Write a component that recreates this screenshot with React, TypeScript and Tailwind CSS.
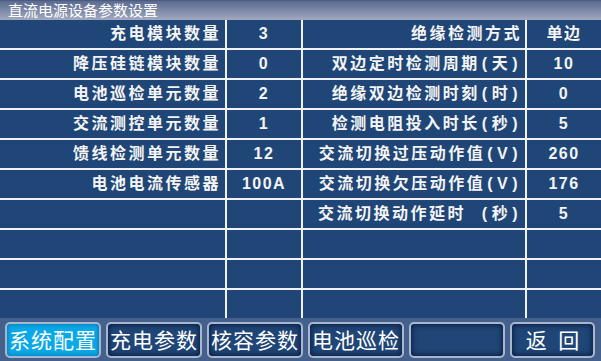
import React from "react";

const left: [string, string][] = [
  ["充电模块数量", "3"],
  ["降压硅链模块数量", "0"],
  ["电池巡检单元数量", "2"],
  ["交流测控单元数量", "1"],
  ["馈线检测单元数量", "12"],
  ["电池电流传感器", "100A"],
  ["", ""],
  ["", ""],
  ["", ""],
  ["", ""],
];
const right: [string, string][] = [
  ["绝缘检测方式", "单边"],
  ["双边定时检测周期(天)", "10"],
  ["绝缘双边检测时刻(时)", "0"],
  ["检测电阻投入时长(秒)", "5"],
  ["交流切换过压动作值(V)", "260"],
  ["交流切换欠压动作值(V)", "176"],
  ["交流切换动作延时  (秒)", "5"],
  ["", ""],
  ["", ""],
  ["", ""],
];

const buttons = ["系统配置", "充电参数", "核容参数", "电池巡检", ""];

function Label({ text }: { text: string }) {
  const parts = text.split(/([()])/);
  return (
    <>
      {parts.map((p, i) =>
        p === "(" || p === ")" ? (
          <span key={i} className="mx-[2px]">
            {p}
          </span>
        ) : (
          <span key={i}>{p}</span>
        )
      )}
    </>
  );
}

export default function App() {
  return (
    <div
      className="w-[601px] h-[361px] bg-[#1f4677] flex flex-col overflow-hidden"
      style={{ fontFamily: '"Liberation Sans", "Noto Sans CJK SC", sans-serif' }}
    >
      <div className="h-[20px] shrink-0 bg-gradient-to-b from-[#5a6a90] to-[#a3a9bf] border-t border-[#4a5a80] flex items-center pl-[8px] text-white text-[15px] leading-none">
        直流电源设备参数设置
      </div>
      <div className="flex flex-col">
        {left.map((l, i) => {
          const r = right[i];
          const last = i === left.length - 1;
          return (
            <div
              key={i}
              className={`grid grid-cols-[225px_76px_224px_76px] ${last ? "h-[28px]" : "h-[30px] border-b-2 border-[#f2f2f2]"} text-[16px] font-bold text-[#f4f4f4] leading-none`}
            >
              <div className="flex items-center justify-end pr-[4px] tracking-[2.5px]">{l[0]}</div>
              <div className="flex items-center justify-center border-l-2 border-[#f2f2f2] tracking-[1.5px]">{l[1]}</div>
              <div className="flex items-center justify-end pr-[3px] border-l-2 border-[#f2f2f2] tracking-[2.5px] whitespace-pre">
                <Label text={r[0]} />
              </div>
              <div className="flex items-center justify-center border-l-2 border-[#f2f2f2] tracking-[1.5px]">{r[1]}</div>
            </div>
          );
        })}
      </div>
      <div className="flex-1 bg-[#44618e] flex items-center gap-[5px] pl-[5px] pt-[1px]">
        {buttons.map((b, i) => (
          <div
            key={i}
            className={`w-[96px] h-[36px] rounded-[5px] border-2 border-[#a9b7cc] flex items-center justify-center text-white text-[21px] leading-none tracking-[1px] ${
              i === 0
                ? "bg-[#0aa8e6] shadow-[inset_0_0_4px_rgba(0,60,120,0.6)]"
                : "bg-[#1f4677] shadow-[inset_0_0_6px_rgba(0,10,40,0.9)]"
            }`}
          >
            {b}
          </div>
        ))}
        <div className="w-[85px] h-[36px] rounded-[5px] border-2 border-[#a9b7cc] flex items-center justify-center text-white text-[21px] leading-none bg-[#1f4677] shadow-[inset_0_0_6px_rgba(0,10,40,0.9)] whitespace-pre">
          返  回
        </div>
      </div>
    </div>
  );
}
